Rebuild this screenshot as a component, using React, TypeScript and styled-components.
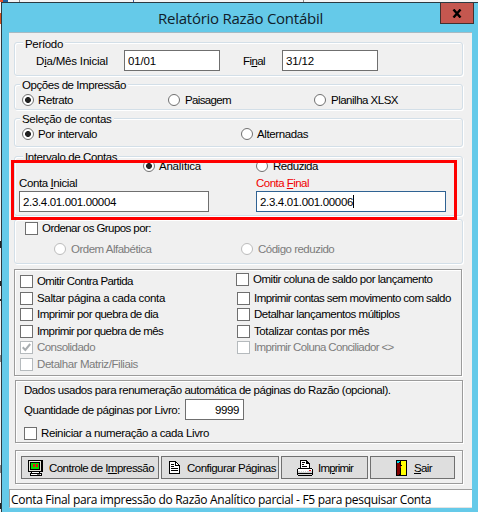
import React from 'react';
import styled, { createGlobalStyle } from 'styled-components';

const GlobalStyle = createGlobalStyle`
  * { box-sizing: border-box; }
  body { margin: 0; overflow: hidden; }
`;

const Desktop = styled.div`
  width: 478px;
  height: 512px;
  padding: 2px 0 0 1px;
  background:
    linear-gradient(#d9531e, #d9531e) 0 13px / 1px 11px no-repeat,
    linear-gradient(#e8502a, #e8502a) 0 0 / 3px 2px no-repeat,
    linear-gradient(#1f5f9e, #1f5f9e) 3px 0 / 5px 2px no-repeat,
    linear-gradient(#888, #888) 19px 0 / 1px 2px no-repeat,
    linear-gradient(#3c5a9a, #3c5a9a) 133px 0 / 1px 2px no-repeat,
    linear-gradient(#888, #888) 303px 0 / 1px 2px no-repeat,
    linear-gradient(#222, #222) 0 241px / 1px 7px no-repeat,
    linear-gradient(#222, #222) 0 281px / 1px 5px no-repeat,
    linear-gradient(#222, #222) 0 299px / 1px 2px no-repeat,
    linear-gradient(#888, #888) 0 355px / 1px 7px no-repeat,
    linear-gradient(#888, #888) 0 465px / 1px 8px no-repeat,
    linear-gradient(#222, #222) 0 503px / 1px 6px no-repeat,
    #f4f4f4;
`;

const Window = styled.div`
  position: relative;
  height: 510px;
  border: solid #2b3a42;
  border-width: 1px 0 0 1px;
  background: #65cae9;
  padding: 0 6px 4px 7px;
  font: 11.5px/14px 'Liberation Sans', Arial, sans-serif;
  color: #000;
  display: flex;
  flex-direction: column;
`;

const TitleBar = styled.header`
  height: 29px;
  flex: none;
  display: grid;
  grid-template-columns: 431px 34px;
  margin-right: -2px;
`;

const Title = styled.h1`
  margin: 0;
  padding-left: 149px;
  font: 15px/30px 'Open Sans', 'Noto Sans', sans-serif;
  letter-spacing: -0.25px;
  white-space: nowrap;
  color: #10202a;
`;

const CloseButton = styled.button`
  width: 34px;
  height: 21px;
  border: 1px solid #43312f;
  border-top: 0;
  background: #c5574f;
  padding: 0;
  display: grid;
  place-items: center;
`;

const Content = styled.main`
  flex: none;
  height: 457px;
  background: #f0f0f0;
  border-top: 1px solid #a7bac3;
  padding: 9px 0 0 5px;
`;

const Group = styled.section<{ $h: number; $gap?: number }>`
  width: 449px;
  height: ${(p) => p.$h}px;
  margin-top: ${(p) => p.$gap ?? 0}px;
  border: 1px solid #d3dfe8;
  border-radius: 3px;
  box-shadow: inset 1px 1px #fff, 1px 1px #fff;
`;

const Panel = styled.section<{ $h: number; $gap: number; $shift?: number }>`
  width: 448px;
  height: ${(p) => p.$h}px;
  margin-top: ${(p) => p.$gap}px;
  margin-left: ${(p) => p.$shift ?? 0}px;
  border: 1px solid #9b9b9b;
  box-shadow: inset 1px 1px #fff, 1px 1px #fff;
`;

const Legend = styled.h2<{ $x: number; $ls: number; $top?: number }>`
  width: max-content;
  height: 12px;
  margin: ${(p) => p.$top ?? -6}px 0 0 ${(p) => p.$x}px;
  padding: 0 2px;
  background: #f0f0f0;
  font: inherit;
  line-height: 12px;
  letter-spacing: ${(p) => p.$ls}px;
`;

const Row = styled.div<{ $cols?: string; $h: number; $x: number; $top?: number }>`
  display: grid;
  grid-template-columns: ${(p) => p.$cols ?? '1fr'};
  align-items: center;
  height: ${(p) => p.$h}px;
  margin-top: ${(p) => p.$top ?? 0}px;
  padding-left: ${(p) => p.$x}px;
`;

const Text = styled.span<{ $ls: number; $red?: boolean }>`
  white-space: nowrap;
  letter-spacing: ${(p) => p.$ls}px;
  color: ${(p) => (p.$red ? '#f00000' : 'inherit')};
`;

const Field = styled.div<{ $w: number; $focus?: boolean; $right?: boolean; $ls: number }>`
  width: ${(p) => p.$w}px;
  height: 21px;
  border: 1px solid ${(p) => (p.$focus ? '#2f6293' : '#6f6f6f')};
  background: #fff;
  padding: ${(p) => (p.$right ? '0 4px 0 0' : '0 0 0 3px')};
  line-height: 18px;
  letter-spacing: ${(p) => p.$ls}px;
  display: flex;
  justify-content: ${(p) => (p.$right ? 'flex-end' : 'flex-start')};
  align-items: center;
  white-space: nowrap;
`;

const Caret = styled.i`
  width: 1px;
  height: 13px;
  background: #000;
`;

const Choice = styled.label<{ $disabled?: boolean; $gap: number; $top?: number; $left?: number }>`
  display: flex;
  align-items: center;
  height: 14px;
  gap: ${(p) => p.$gap}px;
  margin-top: ${(p) => p.$top ?? 0}px;
  margin-left: ${(p) => p.$left ?? 0}px;
  color: ${(p) => (p.$disabled ? '#7c7c7c' : 'inherit')};
`;

const RadioMark = styled.i<{ $disabled?: boolean; $on?: boolean }>`
  flex: none;
  width: 12px;
  height: 12px;
  border-radius: 50%;
  border: 1px solid ${(p) => (p.$disabled ? '#bcbcbc' : '#707070')};
  background: ${(p) => (p.$on ? 'radial-gradient(circle, #222 2.6px, #fff 3.3px)' : '#fff')};
`;

const CheckMark = styled.i<{ $disabled?: boolean }>`
  flex: none;
  width: 13px;
  height: 13px;
  border: 1px solid ${(p) => (p.$disabled ? '#b5babd' : '#6f6f6f')};
  background: #fff;
  display: grid;
  place-items: center;
`;

const OptionColumns = styled.div`
  display: grid;
  grid-template-columns: 217px 1fr;
  padding: 4px 0 0 5px;
`;

const OptionList = styled.div`
  display: grid;
  grid-template-rows: 17px 16px 17px 16px 17px 14px;
`;

const ButtonBar = styled.div`
  display: grid;
  grid-template-columns: 138px 118px 87px 85px;
  column-gap: 2px;
  padding: 5px 0 0 5px;
`;

const ToolButton = styled.button<{ $pad: number; $gap: number }>`
  height: 23px;
  border: 1px solid #707070;
  background: #dedede;
  padding: 0 0 0 ${(p) => p.$pad}px;
  display: flex;
  align-items: center;
  gap: ${(p) => p.$gap}px;
  font: inherit;
  color: inherit;
`;

const StatusBar = styled.footer`
  width: 463px;
  height: 19px;
  margin: 5px 0 0 -5px;
  border-top: 1px solid #a0a0a0;
  border-left: 1px solid #a0a0a0;
  border-bottom: 1px solid #e4e4e4;
  background: #fff;
  padding-left: 1px;
  font: 12px/20px 'Open Sans', 'Noto Sans', sans-serif;
  letter-spacing: -0.31px;
  white-space: nowrap;
`;

const Highlight = styled.div`
  position: absolute;
  left: 9px;
  top: 157px;
  width: 446px;
  height: 60px;
  border: 3px solid #fe0000;
  pointer-events: none;
`;

type ChoiceProps = {
  text: string;
  ls: number;
  on?: boolean;
  disabled?: boolean;
  top?: number;
  left?: number;
  gap?: number;
};

const Radio = ({ text, ls, on, disabled, gap = 4 }: ChoiceProps) => (
  <Choice $gap={gap} $disabled={disabled}>
    <RadioMark $on={on} $disabled={disabled} />
    <Text $ls={ls}>{text}</Text>
  </Choice>
);

const Check = ({ text, ls, on, disabled, top, left, gap = 4 }: ChoiceProps) => (
  <Choice $gap={gap} $disabled={disabled} $top={top} $left={left}>
    <CheckMark $disabled={disabled}>
      {on && (
        <svg width="9" height="9" viewBox="0 0 9 9" fill="none" stroke="#a8adb0" strokeWidth="2">
          <path d="M0.7 4.3 3.3 7 8.2 1" />
        </svg>
      )}
    </CheckMark>
    <Text $ls={ls}>{text}</Text>
  </Choice>
);

const MonitorIcon = () => (
  <svg width="15" height="16" viewBox="0 0 15 16" shapeRendering="crispEdges">
    <path fill="#000" d="M0 0h15v12H0zM3 12h9v1H3zM2 13h12v3H2z" />
    <path fill="#e4e4dc" d="M1 1h12v10H1z" />
    <path fill="#000" d="M2 2h10v8H2z" />
    <path fill="#00e000" d="M3 3h8v6H3z" />
    <path fill="#f01010" d="M5 4h2v3H5zM8 4h2v3H8z" />
    <path fill="#fff" d="M4 12h7v1H4zM3 14h10v1H3z" />
    <path fill="#777" d="M9 14h3v1H9z" />
  </svg>
);

const PageIcon = () => (
  <svg width="11" height="13" viewBox="0 0 11 13" shapeRendering="crispEdges">
    <path fill="#000" d="M0 0h7v1h1v1h1v1h1v1h1v9H0z" />
    <path fill="#fff" d="M1 1h5v4h4v7H1z" />
    <path fill="#fff" d="M7 2h1v1h1v1H7z" />
    <path fill="#000" d="M2 3h3v1H2zM2 5h3v1H2zM2 7h7v1H2zM2 9h7v1H2z" />
  </svg>
);

const PrinterIcon = () => (
  <svg width="16" height="16" viewBox="0 0 16 16" shapeRendering="crispEdges">
    <path fill="#000" d="M3 0h7v1h1v1h1v1h1v5h2v1h1v6h-1v1H1v-1H0V9h1V8h2z" />
    <path fill="#fff" d="M4 1h5v3h3v4H4zM1 9h14v2H1z" />
    <path fill="#000" d="M5 2h3v1H5zM5 4h2v1H5zM5 6h5v1H5zM1 8h14v1H1z" />
    <path fill="#d4d4d4" d="M1 11h14v2H1zM1 14h14v1H1z" />
    <path fill="#fff" d="M3 11h1v1H3zM5 11h1v1H5zM7 11h1v1H7zM9 11h1v1H9z" />
    <path fill="#e01020" d="M12 10h2v1H12z" />
  </svg>
);

const DoorIcon = () => (
  <svg width="11" height="16" viewBox="0 0 11 16" shapeRendering="crispEdges">
    <path fill="#000" d="M0 0h11v16H0z" />
    <path fill="#ffff00" d="M5 1h5v14H5z" />
    <path fill="#800000" d="M1 2h1v1h2v1h1v9H4v1H3v1H1z" />
    <path fill="#00d8e8" d="M1 1h3v1H3v1H1z" />
    <path fill="#000" d="M4 3h1v3H4zM4 8h1v5H4zM5 5h1v1H5z" />
  </svg>
);

export default function App() {
  return (
    <Desktop>
      <GlobalStyle />
      <Window>
        <TitleBar>
          <Title>Relatório Razão Contábil</Title>
          <CloseButton aria-label="Fechar">
            <svg width="10" height="9" viewBox="0 0 10 9" stroke="#000" strokeWidth="2.4">
              <path d="M1.5 0.5 8.5 8.5M8.5 0.5 1.5 8.5" />
            </svg>
          </CloseButton>
        </TitleBar>
        <Content>
          <Group $h={34}>
            <Legend $x={8} $ls={-0.33} $top={-5}>Período</Legend>
            <Row $x={21} $h={21} $cols="88px 119px 39px auto">
              <Text $ls={-0.19}>D<u>i</u>a/Mês Inicial</Text>
              <Field $w={96} $ls={-0.16}>01/01</Field>
              <Text $ls={-0.59}>Fi<u>n</u>al</Text>
              <Field $w={96} $ls={-0.16}>31/12</Field>
            </Row>
          </Group>

          <Group $h={26} $gap={8}>
            <Legend $x={5} $ls={-0.45}>Opções de Impressão</Legend>
            <Row $x={7} $h={14} $top={2} $cols="146px 146px auto">
              <Radio text="Retrato" ls={-0.38} on />
              <Radio text="Paisagem" ls={-0.64} gap={5} />
              <Radio text="Planilha XLSX" ls={-0.5} gap={5} />
            </Row>
          </Group>

          <Group $h={29} $gap={8}>
            <Legend $x={5} $ls={-0.3}>Seleção de contas</Legend>
            <Row $x={7} $h={14} $top={2} $cols="219px auto">
              <Radio text="Por intervalo" ls={-0.42} on />
              <Radio text="Alternadas" ls={-0.4} />
            </Row>
          </Group>

          <Group $h={60} $gap={9}>
            <Legend $x={8} $ls={-0.4}>Intervalo de Contas</Legend>
            <Row $x={128} $h={14} $top={-4} $cols="113px auto">
              <Radio text="Analítica" ls={-0.23} on />
              <Radio text="Reduzida" ls={-0.45} gap={5} />
            </Row>
            <Row $x={4} $h={14} $top={3} $cols="237px auto">
              <Text $ls={-0.4}>Conta <u>I</u>nicial</Text>
              <Text $ls={-0.53} $red>Conta <u>F</u>inal</Text>
            </Row>
            <Row $x={4} $h={21} $top={1} $cols="237px auto">
              <Field $w={190} $ls={-0.34}>2.3.4.01.001.00004</Field>
              <Field $w={190} $ls={-0.34} $focus>2.3.4.01.001.00006<Caret /></Field>
            </Row>
          </Group>

          <Group $h={45} $gap={3}>
            <Row $x={10} $h={14} $top={1}>
              <Check text="Ordenar os Grupos por:" ls={-0.57} />
            </Row>
            <Row $x={39} $h={14} $top={7} $cols="187px auto">
              <Radio text="Ordem Alfabética" ls={-0.49} gap={5} disabled />
              <Radio text="Código reduzido" ls={-0.5} gap={5} disabled />
            </Row>
          </Group>

          <Panel $h={107} $gap={5}>
            <OptionColumns>
              <OptionList>
                <Check text="Omitir Contra Partida" ls={-0.58} />
                <Check text="Saltar página a cada conta" ls={-0.34} />
                <Check text="Imprimir por quebra de dia" ls={-0.53} />
                <Check text="Imprimir por quebra de mês" ls={-0.58} />
                <Check text="Consolidado" ls={-0.54} on disabled />
                <Check text="Detalhar Matriz/Filiais" ls={-0.42} disabled />
              </OptionList>
              <OptionList>
                <Check text="Omitir coluna de saldo por lançamento" ls={-0.47} top={-2} left={-1} />
                <Check text="Imprimir contas sem movimento com saldo" ls={-0.56} />
                <Check text="Detalhar lançamentos múltiplos" ls={-0.5} />
                <Check text="Totalizar contas por mês" ls={-0.4} />
                <Check text="Imprimir Coluna Conciliador <>" ls={-0.63} disabled />
              </OptionList>
            </OptionColumns>
          </Panel>

          <Panel $h={63} $gap={4} $shift={1}>
            <Row $x={8} $h={14} $top={2}>
              <Text $ls={-0.45}>Dados usados para renumeração automática de páginas do Razão (opcional).</Text>
            </Row>
            <Row $x={8} $h={21} $top={2} $cols="161px auto">
              <Text $ls={-0.44}>Quantidade de páginas por Livro:</Text>
              <Field $w={59} $ls={-0.4} $right>9999</Field>
            </Row>
            <Row $x={8} $h={14} $top={6}>
              <Check text="Reiniciar a numeração a cada Livro" ls={-0.38} />
            </Row>
          </Panel>

          <Panel $h={34} $gap={7} $shift={1}>
            <ButtonBar>
              <ToolButton $pad={6} $gap={6}>
                <MonitorIcon />
                <Text $ls={-0.54}>Controle de I<u>m</u>pressão</Text>
              </ToolButton>
              <ToolButton $pad={7} $gap={7}>
                <PageIcon />
                <Text $ls={-0.53}>Configurar Páginas</Text>
              </ToolButton>
              <ToolButton $pad={15} $gap={5}>
                <PrinterIcon />
                <Text $ls={-0.81}>Im<u>p</u>rimir</Text>
              </ToolButton>
              <ToolButton $pad={25} $gap={7}>
                <DoorIcon />
                <Text $ls={-0.61}><u>S</u>air</Text>
              </ToolButton>
            </ButtonBar>
          </Panel>

          <StatusBar>Conta Final para impressão do Razão Analítico parcial - F5 para pesquisar Conta</StatusBar>
        </Content>
        <Highlight />
      </Window>
    </Desktop>
  );
}
